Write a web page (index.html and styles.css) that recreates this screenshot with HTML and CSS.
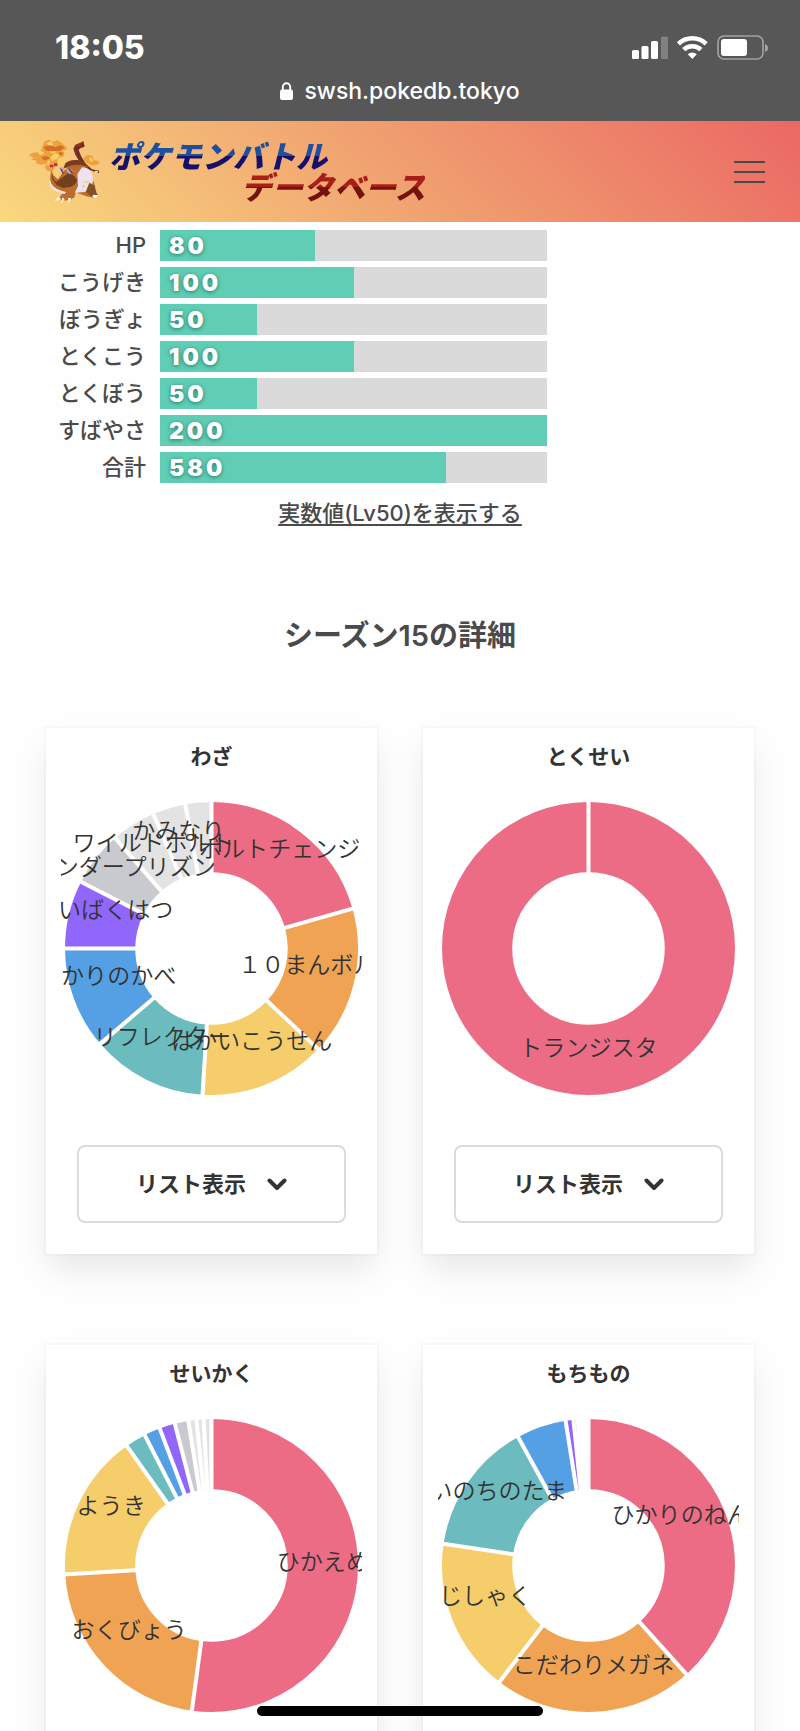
FILE: index.html
```html
<!DOCTYPE html>
<html lang="ja">
<head>
<meta charset="utf-8">
<meta name="viewport" content="width=device-width, initial-scale=1">
<title>ポケモンバトルデータベース</title>
<link rel="stylesheet" href="styles.css">
</head>
<body>
<div class="screen">
  <div class="chrome">
    <div class="status">
      <time class="clock">18:05</time>
      <svg class="status-icons" viewBox="0 0 138 28" width="138" height="28" aria-hidden="true">
        <g fill="#fff">
          <rect x="1" y="16" width="7" height="9" rx="1.5"/>
          <rect x="10.500" y="12" width="7" height="13" rx="1.5"/>
          <rect x="20" y="7" width="7" height="18" rx="1.5"/>
          <rect x="30" y="2.500" width="7" height="22.500" rx="1.5" opacity=".25"/>
          <path d="M61.300 25 56.800 20.200a6.500 6.500 0 0 1 9 0z"/>
        </g>
        <g fill="none" stroke="#fff" stroke-width="4.500">
          <path d="M47.400 9.800a20 20 0 0 1 27.800 0"/>
          <path d="M52.700 15.700a12.500 12.500 0 0 1 17.200 0"/>
        </g>
        <rect x="87" y="2" width="45" height="23" rx="6" fill="none" stroke="#a3a3a3" stroke-width="1.600"/>
        <rect x="90" y="5" width="26" height="17" rx="3" fill="#fff"/>
        <path d="M134 10q3 1 3 4t-3 4z" fill="#a3a3a3"/>
      </svg>
    </div>
    <div class="address">
      <svg viewBox="0 0 13 18" width="13" height="18" aria-hidden="true">
        <rect y="7.500" width="13" height="10.500" rx="2" fill="#fff"/>
        <path d="M2.800 8V5a3.700 3.700 0 0 1 7.400 0v3" fill="none" stroke="#fff" stroke-width="1.900"/>
      </svg>
      <span>swsh.pokedb.tokyo</span>
    </div>
  </div>

  <header class="navbar">
    <a class="brand" href="#">
      <svg class="sprite" viewBox="0 0 240 240" width="80" height="80" aria-hidden="true">
        <g fill="#eda23f">
          <path d="M48 30l14-8 12 8 14-6 14 8 8 10 8 6-4 6-12 2 8 8-4 10-12 2-6 8 4 14-12 8-8 14-14-4-8-10 6-10-18 2-14-4 2-8-18-4 10-4-16-8 12-8 24-2z"/>
          <path d="M172 72l10-4 12 4 4 12 16 4-4 10-20 2-18-10-6-12z"/>
        </g>
        <g fill="#f9cf62">
          <path d="M56 34l12-6 8 10-10 6zM28 62l16-4 6 6-12 6zM66 76l16-12 14 4-8 12-16 8zM86 94l12-10 14-4-6 14-12 10zM182 76l10 2 4 12-10-2zM64 58l14-4 6 6-10 6zM58 88l8-4-2 14-6 2z"/>
        </g>
        <g fill="#d56f27">
          <path d="M46 44l20-4 16 6 14-6 14 6-14 10-22 2-20-2zM38 76l18-4 10 6-16 8zM94 60l12 2-4 8-10-2z"/>
        </g>
        <path d="M166 28l-8 4-16 6-6 12 6 18 12 20 14 16 18 10 26 10 2-8-22-4-18-16-14-22-8-20 6-6 12-4z" fill="#6e3025"/>
        <path d="M168 28l-20 8-4 8 14-4zM142 50l6 18-6-4zM152 46l14-4-4 6z" fill="#a82b2c"/>
        <path d="M114 94q22-16 48-6l20 18-28 2-8 18-30-12z" fill="#b6682d"/>
        <path d="M112 94q22-16 52-6l18 16-26-6-26 2-24 10z" fill="#7a3b20"/>
        <path d="M70 116q-8 28 2 46l20 14 18 4-16 16 10 8 34-6 8-22 44-2 12-10-10-30-20-26-38-4-24 10-20 28-14-12z" fill="#bd6c2b"/>
        <path d="M72 114q0 28 12 36l22-16 14-10 16 6 12 14-6 12-12 8-24 4-20-8-14-20z" fill="#71411f"/>
        <path d="M66 144q4 24 38 34l10 2-4 6q-42-8-46-34z" fill="#f5e8e2"/>
        <path d="M162 106q20 0 30 18 8 22-4 44-18 16-48 14l10-20-2-36z" fill="#ede2ed"/>
        <path d="M176 146h6v6h-6zM186 152h6v6h-6zM164 160h6v6h-6zM176 166h6v6h-6zM168 148h5v5h-5z" fill="#eccb5d"/>
        <path d="M184 152l16 10 6 22 6 8-18 6-22-14z" fill="#805026"/>
        <path d="M146 182l28-2 20 16-14-2zM98 188l34-6 4 12-8 10-28 2z" fill="#bd6c2b"/>
        <path d="M98 120l-4-12 6-4 10 10zM116 118l2-12 8 12 2-10 8 14-12 4z" fill="#adadd0"/>
        <path d="M118 108l8 2 10 14-4 2zM96 108l6 4 6 12-4 2z" fill="#813b38"/>
        <path d="M66 98h10v8H66zM78 94h10v8H78z" fill="#c22b50"/>
        <path d="M92 192l-12 16 16-6zM104 196l-6 20 12-14zM120 198l2 16 8-16zM196 188l18 2-12 8-10-2zM200 116l12 2-8 6z" fill="#fff7ef"/>
      </svg>
      <span class="brand-name">
        <span class="brand-top">ポケモンバトル</span>
        <span class="brand-bottom">データベース</span>
      </span>
    </a>
    <button class="menu" type="button" aria-label="メニュー"><span></span><span></span><span></span></button>
  </header>

  <main class="content">
    <section class="stats">
      <div class="stat"><span class="stat-name">HP</span><div class="track"><div class="fill" style="width:40%">80</div></div></div>
      <div class="stat"><span class="stat-name">こうげき</span><div class="track"><div class="fill" style="width:50%">100</div></div></div>
      <div class="stat"><span class="stat-name">ぼうぎょ</span><div class="track"><div class="fill" style="width:25%">50</div></div></div>
      <div class="stat"><span class="stat-name">とくこう</span><div class="track"><div class="fill" style="width:50%">100</div></div></div>
      <div class="stat"><span class="stat-name">とくぼう</span><div class="track"><div class="fill" style="width:25%">50</div></div></div>
      <div class="stat"><span class="stat-name">すばやさ</span><div class="track"><div class="fill" style="width:100%">200</div></div></div>
      <div class="stat"><span class="stat-name">合計</span><div class="track"><div class="fill" style="width:74%">580</div></div></div>
    </section>
    <a class="toggle" href="#">実数値(Lv50)を表示する</a>

    <h2 class="season">シーズン15の詳細</h2>

    <div class="cards">
      <section class="card">
        <h3>わざ</h3>
        <svg class="chart" viewBox="0 0 300 300" role="img" aria-label="わざ">
          <g class="ring" data-stops="0 74.2 133.3 183.5 229.4 270 297 318.900 336.600 349.700 360"></g>
          <g class="labels">
            <text x="218" y="51">ボルトチェンジ</text>
            <text x="257" y="166">１０まんボルト</text>
            <text x="190" y="242">はかいこうせん</text>
            <text x="101" y="238">リフレクター</text>
            <text x="46" y="177">ひかりのかべ</text>
            <text x="43" y="112">だいばくはつ</text>
            <text x="63" y="69">サンダープリズン</text>
            <text x="92" y="45">ワイルドボルト</text>
            <text x="117" y="33">かみなり</text>
          </g>
        </svg>
        <button class="list-button" type="button">リスト表示
          <svg viewBox="0 0 20 13" width="20" height="13" aria-hidden="true"><path d="M2.500 2.500 10 10l7.500-7.500"/></svg>
        </button>
      </section>

      <section class="card">
        <h3>とくせい</h3>
        <svg class="chart" viewBox="0 0 300 300" role="img" aria-label="とくせい">
          <g class="ring" data-stops="0 360"></g>
          <g class="labels"><text x="150" y="249">トランジスタ</text></g>
        </svg>
        <button class="list-button" type="button">リスト表示
          <svg viewBox="0 0 20 13" width="20" height="13" aria-hidden="true"><path d="M2.500 2.500 10 10l7.500-7.500"/></svg>
        </button>
      </section>

      <section class="card">
        <h3>せいかく</h3>
        <svg class="chart" viewBox="0 0 300 300" role="img" aria-label="せいかく">
          <g class="ring" data-stops="0 187.700 266.500 324.700 332.900 339.300 345.500 350.900 354.100 356.900 360"></g>
          <g class="labels">
            <text x="261" y="147">ひかえめ</text>
            <text x="68" y="214">おくびょう</text>
            <text x="50" y="91">ようき</text>
          </g>
        </svg>
        <button class="list-button" type="button">リスト表示
          <svg viewBox="0 0 20 13" width="20" height="13" aria-hidden="true"><path d="M2.500 2.500 10 10l7.500-7.500"/></svg>
        </button>
      </section>

      <section class="card">
        <h3>もちもの</h3>
        <svg class="chart" viewBox="0 0 300 300" role="img" aria-label="もちもの">
          <g class="ring" data-stops="0 138 217.400 278.500 331.300 351 354.100 355.800 357.200 358.600 360"></g>
          <g class="labels">
            <text x="253" y="100">ひかりのねんど</text>
            <text x="155" y="249">こだわりメガネ</text>
            <text x="47" y="180">じしゃく</text>
            <text x="60" y="76">いのちのたま</text>
          </g>
        </svg>
        <button class="list-button" type="button">リスト表示
          <svg viewBox="0 0 20 13" width="20" height="13" aria-hidden="true"><path d="M2.500 2.500 10 10l7.500-7.500"/></svg>
        </button>
      </section>
    </div>
  </main>
  <div class="home-bar"></div>
</div>
<script src="charts.js"></script>
</body>
</html>
```

FILE: styles.css
```css
* { box-sizing: border-box; }

body {
  margin: 0;
  background: #fefefe;
  color: #4a4a4a;
  font-family: Inter, "Noto Sans CJK JP", sans-serif;
  font-size: 22px;
  line-height: 32px;
}

button { font: inherit; color: inherit; cursor: pointer; }

.screen { height: 100vh; overflow: hidden; }

/* Phone status area */
.chrome { padding: 28px 31px 13px 55px; background: #575757; color: #fff; }
.status { display: flex; justify-content: space-between; align-items: center; height: 40px; }
.clock { font-size: 32px; font-weight: 800; }
.address {
  display: flex;
  justify-content: center;
  align-items: center;
  gap: 11px;
  height: 40px;
  margin-left: -24px;
  padding-top: 6px;
  font-size: 23px;
  font-weight: 500;
}

/* Site header */
.navbar {
  display: flex;
  justify-content: space-between;
  align-items: center;
  padding: 11px 35px 10px 28px;
  background: linear-gradient(45deg, #f9d97e, #f0a070 50%, #eb6864);
}
.brand { display: flex; align-items: center; gap: 1px; text-decoration: none; }
.brand-name {
  display: flex;
  flex-direction: column;
  font-size: 31px;
  font-style: italic;
  font-weight: 900;
  line-height: 31px;
}
.brand-top, .brand-bottom { background-clip: text; -webkit-background-clip: text; color: transparent; }
.brand-top { background-image: linear-gradient(#1f50a0 50%, #160f6c 50%); }
.brand-bottom { margin-left: 132px; background-image: linear-gradient(#a81e18 50%, #74130d 50%); }
.menu {
  display: flex;
  flex-direction: column;
  gap: 8px;
  width: 31px;
  padding: 0;
  border: 0;
  background: none;
}
.menu span { height: 2px; background: #4a4a4a; }

/* Base stats */
.content { display: flex; flex-direction: column; padding: 8px 46px 46px; }
.stats { display: grid; gap: 6px; }
.stat {
  display: grid;
  grid-template-columns: 100px minmax(0, 387px);
  gap: 14px;
  line-height: 31px;
}
.stat-name { text-align: right; font-weight: 500; }
.track { background: #dadada; }
.fill {
  padding: 1px 0 0 9px;
  background: #60ceb5;
  color: #fff;
  font-size: 23px;
  font-weight: 900;
  letter-spacing: 3px;
  line-height: 30px;
  text-shadow: 0 1px 4px rgba(0, 60, 50, .6);
}
.toggle {
  align-self: center;
  margin-top: 14px;
  color: inherit;
  font-weight: 500;
  text-underline-offset: 3px;
}
.season { margin: 87px 0 72px; font-size: 29px; font-weight: 600; line-height: 40px; text-align: center; }

/* Chart cards */
.cards { display: grid; grid-template-columns: 1fr 1fr; gap: 91px 46px; }
.card {
  padding: 13px 15px 31px;
  background: #fff;
  color: #333;
  box-shadow: 0 17px 34px -4px rgba(10, 10, 10, .1), 0 0 0 2px rgba(10, 10, 10, .02);
}
.card h3 { margin: 0 0 25px; font-size: 21px; font-weight: 700; line-height: 32px; text-align: center; }
.chart { display: block; width: 100%; overflow: hidden; }
.ring circle { fill: none; stroke-width: 70; }
.ring line { stroke: #fff; stroke-width: 4; }
.labels { fill: #333; font-size: 23px; font-weight: 350; text-anchor: middle; dominant-baseline: central; }
.list-button {
  display: flex;
  justify-content: center;
  align-items: center;
  gap: 21px;
  width: calc(100% - 32px);
  margin: 46px auto 0;
  padding: 21px;
  border: 2px solid #dbdbdb;
  border-radius: 8px;
  background: #fff;
  font-size: 22px;
  font-weight: 700;
}
.list-button path { fill: none; stroke: #333; stroke-width: 4; stroke-linecap: round; stroke-linejoin: round; }

.home-bar {
  position: fixed;
  bottom: 15px;
  left: 50%;
  width: 286px;
  height: 10px;
  margin-left: -143px;
  border-radius: 5px;
  background: #000;
}
```

FILE: charts.js
```js
// Fills each ring with arcs between consecutive stops (degrees clockwise from 12 o'clock).
const NS = 'http://www.w3.org/2000/svg';
const COLORS = ['#ed6c85', '#f0a353', '#f6cd6b', '#6cbcbf', '#559fe4', '#9166fb', '#c8cacf', '#e3e3e3'];

function add(parent, name, attrs) {
  const el = document.createElementNS(NS, name);
  Object.entries(attrs).forEach(([key, value]) => el.setAttribute(key, value));
  parent.appendChild(el);
}

document.querySelectorAll('.ring').forEach((ring) => {
  const stops = ring.dataset.stops.split(' ').map(Number);
  stops.slice(0, -1).forEach((start, i) => {
    const span = stops[i + 1] - start;
    add(ring, 'circle', {
      cx: 150, cy: 150, r: 111, pathLength: 360,
      stroke: COLORS[Math.min(i, COLORS.length - 1)],
      'stroke-dasharray': `${span} ${360 - span}`,
      transform: `rotate(${start - 90} 150 150)`
    });
  });
  stops.slice(0, -1).forEach((angle) => {
    add(ring, 'line', { x1: 150, y1: 2, x2: 150, y2: 77, transform: `rotate(${angle} 150 150)` });
  });
});
```
